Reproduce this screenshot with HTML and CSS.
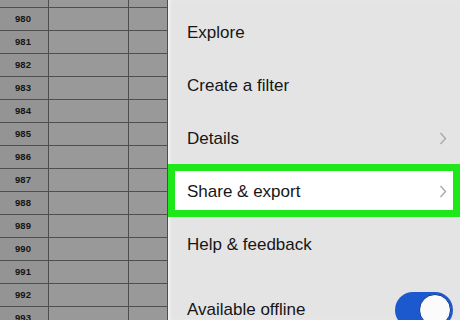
FILE: index.html
```html
<!DOCTYPE html>
<html lang="en">
<head>
    <meta charset="UTF-8">
    <meta name="viewport" content="width=device-width, initial-scale=1.0">
    <title>Sheet menu</title>
    <link rel="stylesheet" href="styles.css">
</head>
<body>
    <div class="screen">
        <div class="sheet">
            <div class="sheet-row sheet-row--top">
                <div class="sheet-head"></div><div class="sheet-cell"></div><div class="sheet-cell sheet-cell--narrow"></div>
            </div>
            <div class="sheet-row"><div class="sheet-head">980</div><div class="sheet-cell"></div><div class="sheet-cell sheet-cell--narrow"></div></div>
            <div class="sheet-row"><div class="sheet-head">981</div><div class="sheet-cell"></div><div class="sheet-cell sheet-cell--narrow"></div></div>
            <div class="sheet-row"><div class="sheet-head">982</div><div class="sheet-cell"></div><div class="sheet-cell sheet-cell--narrow"></div></div>
            <div class="sheet-row"><div class="sheet-head">983</div><div class="sheet-cell"></div><div class="sheet-cell sheet-cell--narrow"></div></div>
            <div class="sheet-row"><div class="sheet-head">984</div><div class="sheet-cell"></div><div class="sheet-cell sheet-cell--narrow"></div></div>
            <div class="sheet-row"><div class="sheet-head">985</div><div class="sheet-cell"></div><div class="sheet-cell sheet-cell--narrow"></div></div>
            <div class="sheet-row"><div class="sheet-head">986</div><div class="sheet-cell"></div><div class="sheet-cell sheet-cell--narrow"></div></div>
            <div class="sheet-row"><div class="sheet-head">987</div><div class="sheet-cell"></div><div class="sheet-cell sheet-cell--narrow"></div></div>
            <div class="sheet-row"><div class="sheet-head">988</div><div class="sheet-cell"></div><div class="sheet-cell sheet-cell--narrow"></div></div>
            <div class="sheet-row"><div class="sheet-head">989</div><div class="sheet-cell"></div><div class="sheet-cell sheet-cell--narrow"></div></div>
            <div class="sheet-row"><div class="sheet-head">990</div><div class="sheet-cell"></div><div class="sheet-cell sheet-cell--narrow"></div></div>
            <div class="sheet-row"><div class="sheet-head">991</div><div class="sheet-cell"></div><div class="sheet-cell sheet-cell--narrow"></div></div>
            <div class="sheet-row"><div class="sheet-head">992</div><div class="sheet-cell"></div><div class="sheet-cell sheet-cell--narrow"></div></div>
            <div class="sheet-row"><div class="sheet-head">993</div><div class="sheet-cell"></div><div class="sheet-cell sheet-cell--narrow"></div></div>
        </div>

        <div class="menu">
            <div class="menu-item">Explore</div>
            <div class="menu-item">Create a filter</div>
            <div class="menu-item">
                <span>Details</span>
                <svg class="chevron" width="8" height="13" viewBox="0 0 8 13"><polyline points="1.5,1 6.5,6.5 1.5,12" /></svg>
            </div>
            <div class="menu-item menu-item--marked">
                <span>Share &amp; export</span>
                <svg class="chevron" width="8" height="13" viewBox="0 0 8 13"><polyline points="1.5,1 6.5,6.5 1.5,12" /></svg>
            </div>
            <div class="menu-item">Help &amp; feedback</div>
            <div class="menu-divider"></div>
            <div class="menu-item menu-item--switch">
                <span>Available offline</span>
                <div class="toggle"><div class="toggle-knob"></div></div>
            </div>
        </div>
    </div>
</body>
</html>
```

FILE: styles.css
```css
body {
    margin: 0;
    background-color: #e4e4e4;
    font-family: "Liberation Sans", Arial, sans-serif;
}

.screen {
    display: flex;
    width: 460px;
    height: 320px;
    overflow: hidden;
}

/* spreadsheet behind the menu */
.sheet {
    display: flex;
    flex-direction: column;
    width: 168px;
    flex-shrink: 0;
    background-color: #999;
}

.sheet-row {
    display: flex;
    height: 23px;
    flex-shrink: 0;
    box-sizing: border-box;
    border-bottom: 1px solid #4e4e4e;
}

.sheet-row--top {
    height: 8px;
}

.sheet-head {
    width: 49px;
    box-sizing: border-box;
    border-right: 1px solid #4e4e4e;
    background-color: #949494;
    font-size: 9.5px;
    font-weight: bold;
    color: #151515;
    text-align: center;
    line-height: 22px;
    padding-right: 2px;
}

.sheet-cell {
    width: 80px;
    box-sizing: border-box;
    border-right: 1px solid #4e4e4e;
}

.sheet-cell--narrow {
    width: 39px;
}

/* side menu */
.menu {
    flex: 1;
    display: flex;
    flex-direction: column;
    padding-top: 5px;
    background-color: #e4e4e4;
    box-shadow: inset 3px 0 3px -1px rgba(255, 255, 255, 0.6);
}

.menu-item {
    display: flex;
    align-items: center;
    justify-content: space-between;
    height: 53px;
    flex-shrink: 0;
    box-sizing: border-box;
    padding: 2px 13px 0 19px;
    font-size: 17px;
    color: #161616;
}

.menu-item--marked {
    background-color: #fff;
    border: 7px solid #1ee81a;
    padding: 2px 6px 0 12px;
}

.chevron {
    fill: none;
    stroke: #a9a9a9;
    stroke-width: 1.4;
}

.menu-divider {
    height: 1px;
    margin-top: 2px;
    background-color: #d2d2d2;
}

.menu-item--switch {
    height: 76px;
    padding-right: 7px;
    padding-top: 0;
}

.toggle {
    position: relative;
    width: 58px;
    height: 36px;
    border-radius: 18px;
    background-color: #1c59cf;
}

.toggle-knob {
    position: absolute;
    top: 2px;
    right: 2px;
    width: 32px;
    height: 32px;
    box-sizing: border-box;
    border-radius: 50%;
    background-color: #fbfbfb;
    border: 1.5px solid #0d3690;
}
```
